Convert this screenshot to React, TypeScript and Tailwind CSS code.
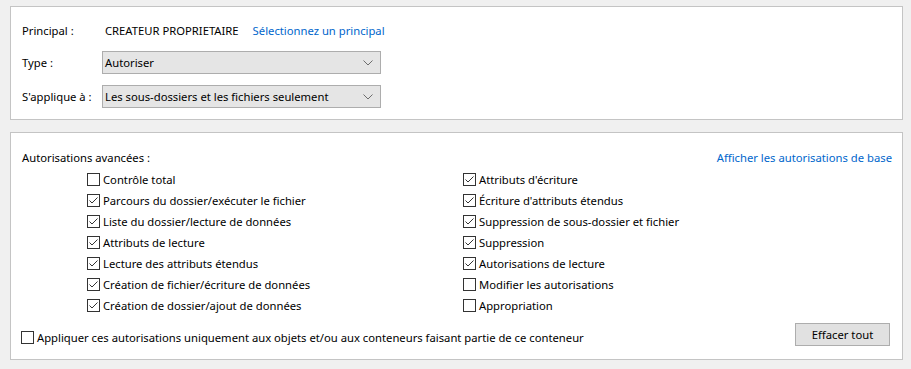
import React from 'react';

const font = { fontFamily: '"Noto Sans", "Liberation Sans", sans-serif' };

function Box({ checked }: { checked: boolean }) {
  return (
    <svg width="13" height="13" viewBox="0 0 13 13" className="shrink-0">
      <rect x="0.5" y="0.5" width="12" height="12" fill="#fff" stroke="#333" />
      {checked && <path d="M2.5 6.5 L5 9 L10.5 3.5" fill="none" stroke="#333" strokeWidth="1" />}
    </svg>
  );
}

function Check({ label, checked }: { label: string; checked: boolean }) {
  return (
    <div className="flex h-[21px] items-center gap-[3px]">
      <Box checked={checked} />
      <span>{label}</span>
    </div>
  );
}

function Combo({ value }: { value: string }) {
  return (
    <div className="flex h-[23px] w-[279px] items-center justify-between border border-[#adadad] bg-[#e5e5e5] pl-[2px] pr-[7px]">
      <span>{value}</span>
      <svg width="10" height="6" viewBox="0 0 10 6">
        <path d="M0.5 0.5 L5 5 L9.5 0.5" fill="none" stroke="#6d6d6d" strokeWidth="1" />
      </svg>
    </div>
  );
}

const left: [string, boolean][] = [
  ['Contrôle total', false],
  ['Parcours du dossier/exécuter le fichier', true],
  ['Liste du dossier/lecture de données', true],
  ['Attributs de lecture', true],
  ['Lecture des attributs étendus', true],
  ['Création de fichier/écriture de données', true],
  ['Création de dossier/ajout de données', true],
];

const right: [string, boolean][] = [
  ["Attributs d'écriture", true],
  ["Écriture d'attributs étendus", true],
  ['Suppression de sous-dossier et fichier', true],
  ['Suppression', true],
  ['Autorisations de lecture', true],
  ['Modifier les autorisations', false],
  ['Appropriation', false],
];

export default function App() {
  return (
    <div className="h-[369px] w-[911px] bg-[#f0f0f0] pt-[6px] text-[11.25px] leading-none text-black" style={font}>
      <div className="ml-[10px] flex h-[114px] w-[893px] flex-col border border-[#c4c4c4] bg-white pl-[11px] pt-[12px]">
        <div className="flex h-[23px] items-center">
          <span className="w-[80px]">Principal :</span>
          <span className="ml-[3px]">CREATEUR PROPRIETAIRE</span>
          <span className="ml-[14px] text-[#0066cc]">Sélectionnez un principal</span>
        </div>
        <div className="mt-[9px] flex h-[23px] items-center">
          <span className="w-[80px]">Type :</span>
          <Combo value="Autoriser" />
        </div>
        <div className="mt-[11px] flex h-[23px] items-center">
          <span className="w-[80px]">S'applique à :</span>
          <Combo value="Les sous-dossiers et les fichiers seulement" />
        </div>
      </div>

      <div className="ml-[10px] mt-[12px] flex h-[228px] w-[893px] flex-col border border-[#c4c4c4] bg-white pl-[10px] pr-[10px] pt-[16px]">
        <div className="flex h-[17px] items-center justify-between">
          <span className="ml-[1px]">Autorisations avancées :</span>
          <span className="text-[#0066cc]">Afficher les autorisations de base</span>
        </div>
        <div className="mt-[3px] flex pl-[66px]">
          <div className="flex w-[376px] flex-col">
            {left.map(([l, c]) => (
              <Check key={l} label={l} checked={c} />
            ))}
          </div>
          <div className="flex flex-col">
            {right.map(([l, c]) => (
              <Check key={l} label={l} checked={c} />
            ))}
          </div>
        </div>
        <div className="mt-[7px] flex items-start justify-between pr-[2px]">
          <div className="mt-[6px] flex h-[17px] items-center gap-[3px]">
            <Box checked={false} />
            <span>Appliquer ces autorisations uniquement aux objets et/ou aux conteneurs faisant partie de ce conteneur</span>
          </div>
          <div className="flex h-[23px] w-[95px] items-center justify-center border border-[#adadad] bg-[#e1e1e1]">
            Effacer tout
          </div>
        </div>
      </div>
    </div>
  );
}
